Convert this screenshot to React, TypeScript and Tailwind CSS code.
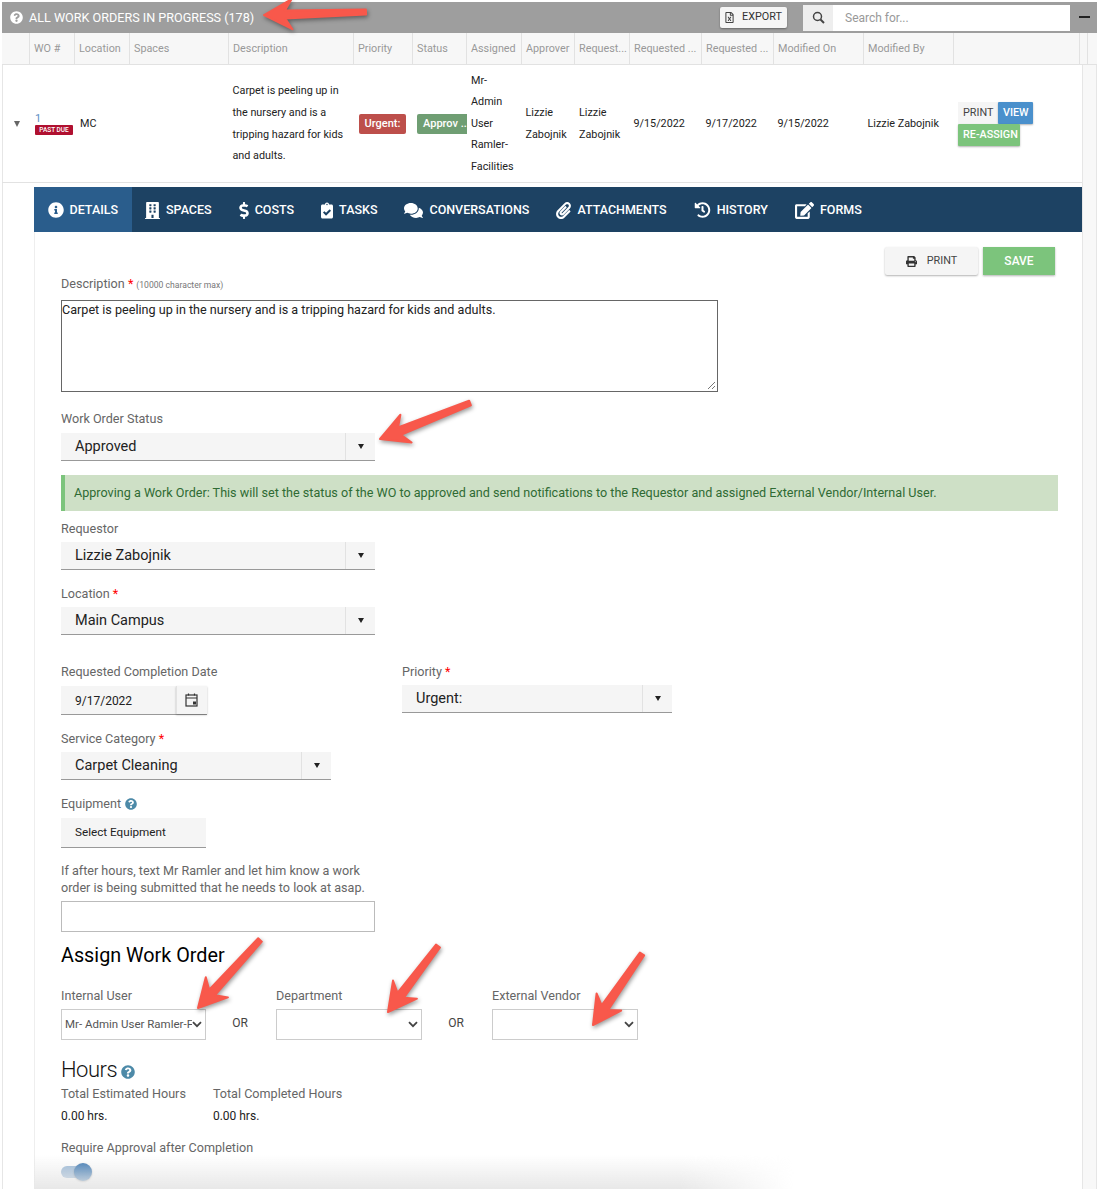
import React from 'react';
import {
  FaBuilding, FaClipboardCheck, FaComments, FaDollarSign, FaEdit, FaHistory,
  FaInfoCircle, FaPaperclip, FaPrint, FaQuestionCircle, FaRegFileExcel,
} from 'react-icons/fa';

const COLS = 'grid-cols-[28px_45px_55px_99px_125px_59px_54px_55px_53px_55px_72px_72px_90px_90px_126px_1fr]';

const HEADERS = ['', 'WO #', 'Location', 'Spaces', 'Description', 'Priority', 'Status', 'Assigned', 'Approver',
  'Request...', 'Requested ...', 'Requested ...', 'Modified On', 'Modified By', ''];

const TABS = [
  { label: 'DETAILS', icon: FaInfoCircle, iconClass: 'h-[16px] w-[16px]', active: true },
  { label: 'SPACES', icon: FaBuilding, iconClass: 'h-[17px] w-[15px]' },
  { label: 'COSTS', icon: FaDollarSign, iconClass: 'h-[17px] w-[10px]' },
  { label: 'TASKS', icon: FaClipboardCheck, iconClass: 'h-[17px] w-[12px]' },
  { label: 'CONVERSATIONS', icon: FaComments, iconClass: 'h-[17px] w-[19px]' },
  { label: 'ATTACHMENTS', icon: FaPaperclip, iconClass: 'h-[17px] w-[15px]' },
  { label: 'HISTORY', icon: FaHistory, iconClass: 'h-[16px] w-[17px]' },
  { label: 'FORMS', icon: FaEdit, iconClass: 'h-[17px] w-[19px]' },
];

// arrows dropped on top of the screenshot: [tail x, tail y, tip x, tip y]
const ARROWS = [
  [366, 12, 264, 15],
  [470, 403, 380, 439],
  [260, 940, 198, 1008],
  [438, 946, 388, 1012],
  [642, 954, 593, 1025],
];

function arrowPath([tx, ty, hx, hy]: number[]) {
  const len = Math.hypot(hx - tx, hy - ty);
  const ux = (hx - tx) / len;
  const uy = (hy - ty) / len;
  const nx = -uy;
  const ny = ux;
  const at = (along: number, side: number) =>
    `${(tx + ux * along + nx * side).toFixed(1)} ${(ty + uy * along + ny * side).toFixed(1)}`;
  const neck = len - 21;
  const barb = len - 28;
  return `M${at(0, -2.5)} L${at(neck, -4)} L${at(barb, -15)} L${at(len, 0)} L${at(barb, 15)} L${at(neck, 4)} L${at(0, 2.5)} Z`;
}

function Label({ children, required, hint, className = '' }: { children: React.ReactNode; required?: boolean; hint?: string; className?: string }) {
  return (
    <div className={`text-[12.6px] leading-[16px] text-[#666] ${className}`}>
      {children}
      {required && <span className="text-[#f00]"> *</span>}
      {hint && <span className="ml-[3px] text-[8.6px] text-[#777]">{hint}</span>}
    </div>
  );
}

function ComboBox({ value, className = '', textClass = '' }: { value: string; className?: string; textClass?: string }) {
  return (
    <div className={`flex h-[28px] items-center border-b border-[#999] bg-[#f5f5f5] ${className}`}>
      <div className={`flex-1 pl-[14px] text-[14.5px] text-[#222] ${textClass}`}>{value}</div>
      <div className="flex h-full w-[30px] items-center justify-center border-l border-[#e2e2e2]">
        <div className="h-0 w-0 border-x-[3.5px] border-t-[5px] border-x-transparent border-t-[#222]" />
      </div>
    </div>
  );
}

function PlainSelect({ value, className = '' }: { value?: string; className?: string }) {
  return (
    <div className={`flex h-[31px] items-center border border-[#ccc] pl-[3px] pr-[3px] ${className}`}>
      <div className="flex-1 overflow-hidden whitespace-nowrap text-[11.5px] text-[#555]">{value}</div>
      <svg width="10" height="7" viewBox="0 0 10 7" className="shrink-0">
        <path d="M1 1.2 L5 5.2 L9 1.2" fill="none" stroke="#444" strokeWidth="1.8" />
      </svg>
    </div>
  );
}

export default function App() {
  return (
    <div className="relative h-[1189px] w-[1099px] overflow-hidden bg-white pl-[2px] pr-[2px] pt-[2px] font-['Roboto',sans-serif]">
      {/* Title bar */}
      <div className="flex h-[31px] items-center bg-[#9e9e9e] pl-[8px] pr-[7px]">
        <FaQuestionCircle className="text-[13px] text-white" />
        <div className="ml-[6px] w-[225px] whitespace-nowrap pt-[1px] text-[12.6px] text-white">ALL WORK ORDERS IN PROGRESS (178)</div>
        <div className="ml-[466px] flex h-[21px] w-[67px] shrink-0 items-center rounded-[2px] bg-[#f5f5f5] pl-[4px] shadow-[0_1px_2px_rgba(0,0,0,0.35)]">
          <FaRegFileExcel className="text-[11px] text-[#444]" />
          <span className="ml-[7px] text-[10.8px] text-[#333]">EXPORT</span>
        </div>
        <div className="ml-[16px] flex h-[26px] w-[30px] shrink-0 items-center justify-center bg-[#eee]">
          <svg width="13" height="13" viewBox="0 0 13 13">
            <circle cx="5.5" cy="5.5" r="4" fill="none" stroke="#444" strokeWidth="1.5" />
            <path d="M8.5 8.5 L12 12" stroke="#444" strokeWidth="2" />
          </svg>
        </div>
        <div className="flex h-[26px] w-[237px] shrink-0 items-center bg-white pl-[12px] text-[12px] text-[#999]">Search for...</div>
        <div className="mb-[2px] ml-[9px] h-[2px] w-[11px] shrink-0 bg-[#222]" />
      </div>

      {/* Table head */}
      <div className={`grid h-[32px] ${COLS} border-b border-[#e2e2e2] bg-[#f7f7f7]`}>
        {HEADERS.map((h, i) => (
          <div key={i} className="flex items-center overflow-hidden whitespace-nowrap border-r border-[#e2e2e2] pl-[4px] pt-[1px] text-[10.8px] text-[#999]">
            {h}
          </div>
        ))}
        <div className="pl-[3.5px]">
          <div className="h-full w-[4px] border-r border-[#e2e2e2]" />
        </div>
      </div>

      <div className="flex">
        <div className="w-[1080px] shadow-[inset_1px_0_0_#e6e6e6]">
          {/* Work order row */}
          <div className={`grid h-[118px] ${COLS} items-center border-b border-[#e2e2e2] text-[10.8px] leading-[21.6px] text-[#222]`}>
            <div className="flex justify-center pl-[2px]">
              <div className="h-0 w-0 border-x-[3.5px] border-t-[6px] border-x-transparent border-t-[#666]" />
            </div>
            <div className="pl-[5px]">
              <div className="text-[11px] leading-[12px] text-[#5b8ec4]">1</div>
              <div className="h-[10px] w-[38px] rounded-[1px] bg-[#b01030] text-center text-[6.5px] font-medium leading-[10px] text-white">PAST DUE</div>
            </div>
            <div className="pl-[5px]">MC</div>
            <div />
            <div className="pl-[3.5px]">Carpet is peeling up in the nursery and is a tripping hazard for kids and adults.</div>
            <div className="pl-[5px]">
              <div className="flex h-[20px] w-[47px] items-center justify-center rounded-[2px] bg-[#bd4f4b] text-[11px] font-medium text-white">Urgent:</div>
            </div>
            <div className="pl-[4px]">
              <div className="flex h-[20px] w-[50px] items-center overflow-hidden whitespace-nowrap rounded-l-[2px] bg-[#6f9e73] pl-[6px] text-[11px] font-medium text-white">Approv ..</div>
            </div>
            <div className="pl-[4px] pr-[4px]">Mr- Admin User Ramler- Facilities</div>
            <div className="pl-[3.5px]">Lizzie Zabojnik</div>
            <div className="pl-[4px]">Lizzie Zabojnik</div>
            <div className="pl-[3.5px]">9/15/2022</div>
            <div className="pl-[3.5px]">9/17/2022</div>
            <div className="pl-[3.5px]">9/15/2022</div>
            <div className="pl-[3.5px]">Lizzie Zabojnik</div>
            <div className="col-span-2 flex flex-wrap gap-y-0 pl-[4px] text-[10.8px] leading-[21px]">
              <div className="h-[22px] bg-[#f5f5f5] px-[5px] text-[#444]">PRINT</div>
              <div className="h-[22px] rounded-[1px] bg-[#4a90cc] px-[4.5px] font-medium text-white shadow-[0_1px_2px_rgba(0,0,0,0.3)]">VIEW</div>
              <div className="h-[22px] w-[62px] rounded-[1px] bg-[#7cc47c] pl-[5px] font-medium text-white shadow-[0_1px_2px_rgba(0,0,0,0.3)]">RE-ASSIGN</div>
              <div className="w-[100px]" />
            </div>
          </div>

          {/* Detail panel */}
          <div className="ml-[32px] mt-[4px] border-l border-[#eee]">
            <div className="-ml-px flex h-[45px] items-stretch bg-[#1d4263] text-[12.5px] font-medium text-white">
              {TABS.map((t) => (
                <div key={t.label} className={`flex items-center gap-[6px] px-[13.5px] pt-[1px] ${t.active ? 'bg-[#2a5d8c]' : ''}`}>
                  <t.icon className={t.iconClass} />
                  <span>{t.label}</span>
                </div>
              ))}
            </div>

            <div className="pb-[20px] pl-[26px]">
              <div className="flex justify-end gap-[5px] pr-[27px] pt-[15px]">
                <div className="flex h-[28px] w-[93px] items-center justify-center gap-[10px] rounded-[2px] bg-[#f5f5f5] text-[10.8px] text-[#444] shadow-[0_1px_2px_rgba(0,0,0,0.3)]">
                  <FaPrint className="text-[11px] text-[#333]" />
                  PRINT
                </div>
                <div className="flex h-[28px] w-[72px] items-center justify-center bg-[#7cc47c] text-[12px] font-medium text-white shadow-[0_1px_2px_rgba(0,0,0,0.3)]">SAVE</div>
              </div>

              <Label required hint="(10000 character max)" className="mt-[1px]">
                Description
              </Label>
              <div className="relative mt-[7px] h-[92px] w-[657px] border border-[#666] text-[12.6px] leading-[18px] text-[#222]">
                Carpet is peeling up in the nursery and is a tripping hazard for kids and adults.
                <svg width="9" height="9" viewBox="0 0 9 9" className="absolute bottom-[1px] right-[1px]">
                  <path d="M1 8 L8 1 M5 8 L8 5" stroke="#777" strokeWidth="1" />
                </svg>
              </div>

              <Label className="mt-[19px]">Work Order Status</Label>
              <ComboBox value="Approved" className="mt-[6px] w-[314px]" />

              <div className="mt-[14px] flex h-[36px] w-[997px] items-center border-l-[4px] border-[#7cc47c] bg-[#cee0c6] pl-[9px] text-[12.6px] text-[#2f6b34]">
                Approving a Work Order: This will set the status of the WO to approved and send notifications to the Requestor and assigned External Vendor/Internal User.
              </div>

              <Label className="mt-[10px]">Requestor</Label>
              <ComboBox value="Lizzie Zabojnik" textClass="pt-[1px]" className="mt-[5px] w-[314px]" />

              <Label required className="mt-[16px]">Location</Label>
              <ComboBox value="Main Campus" className="mt-[5px] w-[314px]" />

              <div className="mt-[29px] flex">
                <div className="w-[341px]">
                  <Label>Requested Completion Date</Label>
                  <div className="mt-[6px] flex h-[29px] w-[146px] border-b border-[#999] bg-[#f5f5f5]">
                    <div className="flex flex-1 items-center pl-[14px] pt-[1px] text-[12px] text-[#222]">9/17/2022</div>
                    <div className="flex w-[31px] items-center justify-center border-l border-[#e2e2e2] pr-[1px] shadow-[0_1px_2px_rgba(0,0,0,0.25)]">
                      <svg width="13" height="14" viewBox="0 0 13 14">
                        <rect x="1" y="2" width="11" height="11" fill="none" stroke="#333" strokeWidth="1.2" />
                        <path d="M1 5 H12 M3.5 0.5 V2.5 M9.5 0.5 V2.5" stroke="#333" strokeWidth="1.2" />
                        <rect x="8" y="8.5" width="3" height="3" fill="#333" />
                      </svg>
                    </div>
                  </div>
                </div>
                <div>
                  <Label required>Priority</Label>
                  <ComboBox value="Urgent:" textClass="pt-[1px]" className="mt-[5px] w-[270px]" />
                </div>
              </div>

              <Label required className="mt-[16px]">Service Category</Label>
              <ComboBox value="Carpet Cleaning" textClass="pt-[1px]" className="mt-[5px] w-[270px]" />

              <Label className="mt-[16px] flex items-center gap-[4px]">
                Equipment
                <FaQuestionCircle className="text-[12px] text-[#4d8aa8]" />
              </Label>
              <div className="mt-[6px] flex h-[30px] w-[145px] items-center border-b border-[#999] bg-[#f5f5f5] pl-[14px] text-[11.7px] text-[#222]">Select Equipment</div>

              <div className="mt-[14px] w-[320px] text-[12.6px] leading-[17px] text-[#666]">
                If after hours, text Mr Ramler and let him know a work order is being submitted that he needs to look at asap.
              </div>
              <div className="mt-[5px] h-[31px] w-[314px] border border-[#bbb]" />

              <div className="mt-[10px] text-[19.8px] leading-[28px] text-black">Assign Work Order</div>

              <div className="mt-[18px] flex">
                <div>
                  <Label>Internal User</Label>
                  <PlainSelect value="Mr- Admin User Ramler-Facilities" className="mt-[5px] w-[145px]" />
                </div>
                <div className="mt-[26px] w-[70px] pr-[2px] text-center text-[12px] text-[#444]">OR</div>
                <div>
                  <Label>Department</Label>
                  <PlainSelect className="mt-[5px] w-[146px]" />
                </div>
                <div className="mt-[26px] w-[70px] pr-[2px] text-center text-[12px] text-[#444]">OR</div>
                <div>
                  <Label>External Vendor</Label>
                  <PlainSelect className="mt-[5px] w-[146px]" />
                </div>
              </div>

              <div className="mt-[15px] flex items-center gap-[4px] text-[22px] font-light leading-[30px] tracking-[-0.5px] text-[#111]">
                Hours
                <FaQuestionCircle className="mt-[4px] text-[14px] text-[#4d8aa8]" />
              </div>

              <div className="mt-[1px] flex gap-[27px]">
                <div>
                  <Label>Total Estimated Hours</Label>
                  <div className="mt-[6px] text-[12px] leading-[16px] text-[#222]">0.00 hrs.</div>
                </div>
                <div>
                  <Label>Total Completed Hours</Label>
                  <div className="mt-[6px] text-[12px] leading-[16px] text-[#222]">0.00 hrs.</div>
                </div>
              </div>

              <Label className="mt-[16px]">Require Approval after Completion</Label>
              <div className="relative mt-[10px] h-[12px] w-[26px] rounded-full bg-[#8fb1d3]">
                <div className="absolute left-[13px] top-[-3px] h-[18px] w-[18px] rounded-full bg-[#2e6fae] shadow-[0_1px_2px_rgba(0,0,0,0.4)]" />
              </div>
            </div>
          </div>
        </div>

        {/* Scrollbar track */}
        <div className="flex-1 border-x border-[#e6e6e6] bg-[#f8f8f8]" />
      </div>

      {/* Fade at the lower edge of the shot */}
      <div className="pointer-events-none absolute bottom-0 left-[34px] h-[34px] w-[760px] bg-gradient-to-b from-transparent to-[#e8e8e8] [mask-image:linear-gradient(to_right,black_85%,transparent)]" />

      {/* Annotation arrows */}
      <svg width="1099" height="1189" viewBox="0 0 1099 1189" className="pointer-events-none absolute left-0 top-0 drop-shadow-[1px_2px_2px_rgba(0,0,0,0.4)]">
        {ARROWS.map((a, i) => (
          <path key={i} d={arrowPath(a)} fill="#f8584b" stroke="#f8584b" strokeWidth="2" strokeLinejoin="round" />
        ))}
      </svg>
    </div>
  );
}
